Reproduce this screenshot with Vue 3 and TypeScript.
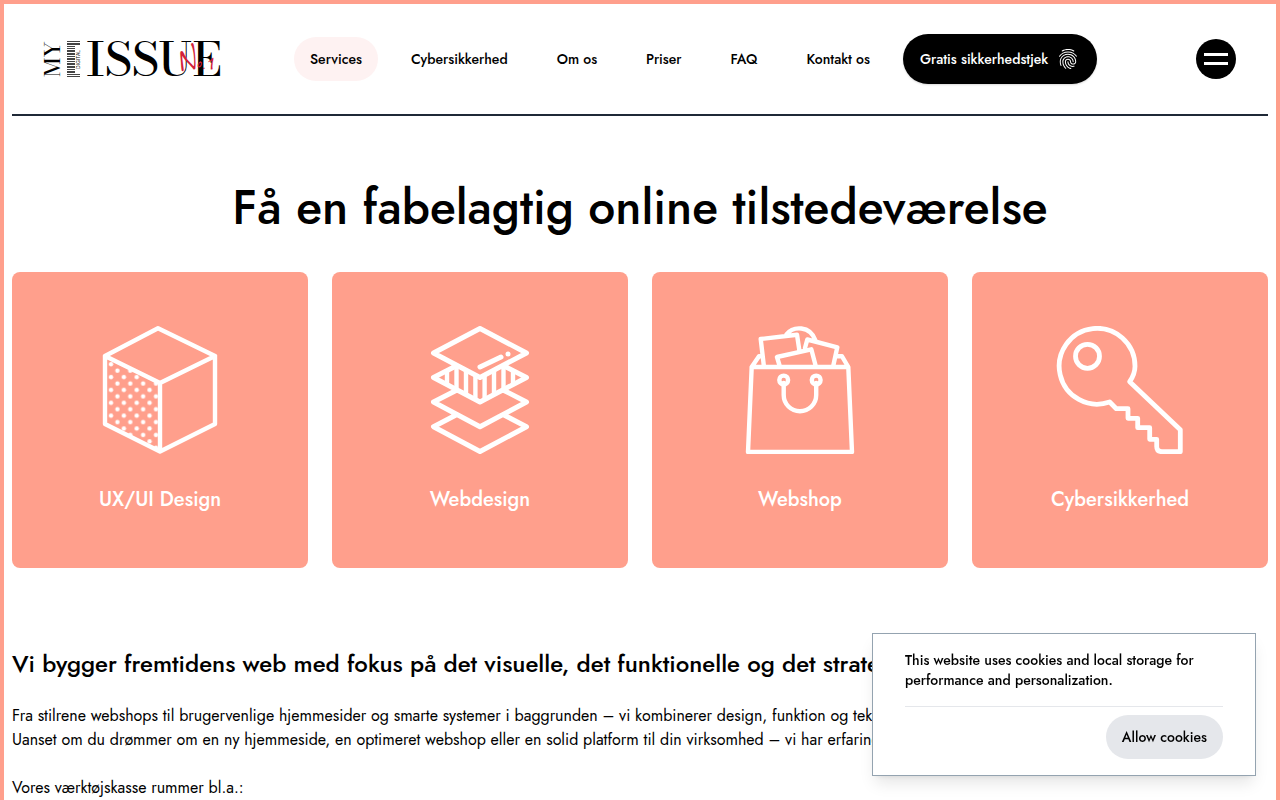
<script setup lang="ts">
import { ref } from 'vue'

interface NavItem {
  label: string
  active?: boolean
}

const navItems: NavItem[] = [
  { label: 'Services', active: true },
  { label: 'Cybersikkerhed' },
  { label: 'Om os' },
  { label: 'Priser' },
  { label: 'FAQ' },
  { label: 'Kontakt os' },
]

const barcode: number[][] = [
  [0, 1], [2, 2], [5, 1], [7, 1], [9, 2], [12, 2], [15, 1], [17, 2], [20, 1],
  [22, 2], [25, 2], [28, 1], [30, 2], [33, 1], [35, 1],
]
const stripes: number[] = [31, 40.5, 50, 59.4, 68.6, 78, 87.5, 97]
const cookiesOpen = ref(true)
</script>

<template>
  <div class="page">
    <header class="header">
      <a class="logo" href="#" aria-label="My Digital Issue No.1">
        <svg width="178" height="40" viewBox="0 0 178 40">
          <text class="logo-serif" font-size="22" transform="translate(16 38) rotate(-90)">MY</text>
          <g fill="#444">
            <rect v-for="(b, i) in barcode" :key="i" x="23" :y="b[0] + 2" :width="b[0] < 4 || b[0] > 31 ? 13 : 8" :height="b[1]" />
          </g>
          <text class="logo-tiny" transform="translate(36 30) rotate(-90)">DIGITAL</text>
          <text class="logo-serif" font-size="47" x="42" y="37">ISSUE</text>
          <text class="logo-script" x="132" y="31"><tspan font-size="40">N</tspan><tspan font-size="24">o.</tspan><tspan font-size="32">1</tspan></text>
        </svg>
      </a>
      <nav class="nav">
        <a v-for="item in navItems" :key="item.label" href="#" class="nav-link" :class="{ active: item.active }">{{ item.label }}</a>
        <a href="#" class="check">
          <span>Gratis sikkerhedstjek</span>
          <svg width="24" height="24" viewBox="0 0 24 24" fill="currentColor" aria-hidden="true">
            <path d="M17.81 4.47c-.08 0-.16-.02-.23-.06C15.66 3.42 14 3 12.01 3c-1.98 0-3.86.47-5.57 1.41-.24.13-.54.04-.68-.2-.13-.24-.04-.55.2-.68C7.82 2.52 9.86 2 12.01 2c2.13 0 3.99.47 6.03 1.52.25.13.34.43.21.67-.09.18-.26.28-.44.28zM3.5 9.72c-.1 0-.2-.03-.29-.09-.23-.16-.28-.47-.12-.7.99-1.4 2.25-2.5 3.75-3.27C9.98 4.04 14 4.03 17.15 5.65c1.5.77 2.76 1.86 3.75 3.25.16.22.11.54-.12.7-.23.16-.54.11-.7-.12-.9-1.26-2.04-2.25-3.39-2.94-2.87-1.47-6.54-1.47-9.4.01-1.36.7-2.5 1.7-3.4 2.96-.08.14-.23.21-.39.21zm6.25 12.07c-.13 0-.26-.05-.35-.15-.87-.87-1.34-1.43-2.01-2.64-.69-1.23-1.05-2.73-1.05-4.34 0-2.97 2.54-5.39 5.66-5.39s5.66 2.42 5.66 5.39c0 .28-.22.5-.5.5s-.5-.22-.5-.5c0-2.42-2.09-4.39-4.66-4.39-2.57 0-4.66 1.97-4.66 4.39 0 1.44.32 2.77.93 3.85.64 1.15 1.08 1.64 1.85 2.42.19.2.19.51 0 .71-.11.1-.24.15-.37.15zm7.17-1.85c-1.19 0-2.24-.3-3.1-.89-1.49-1.01-2.38-2.65-2.38-4.39 0-.28.22-.5.5-.5s.5.22.5.5c0 1.41.72 2.74 1.94 3.56.71.48 1.54.71 2.54.71.24 0 .64-.03 1.04-.1.27-.05.53.13.58.41.05.27-.13.53-.41.58-.57.11-1.07.12-1.21.12zM14.91 22c-.04 0-.09-.01-.13-.02-1.59-.44-2.63-1.03-3.72-2.1-1.4-1.39-2.17-3.24-2.17-5.22 0-1.62 1.38-2.94 3.08-2.94 1.7 0 3.08 1.32 3.08 2.94 0 1.07.93 1.94 2.08 1.94s2.08-.87 2.08-1.94c0-3.77-3.25-6.83-7.25-6.83-2.84 0-5.44 1.58-6.61 4.03-.39.81-.59 1.76-.59 2.8 0 .78.07 2.01.67 3.61.1.26-.03.55-.29.64-.26.1-.55-.04-.64-.29-.49-1.31-.73-2.61-.73-3.96 0-1.2.23-2.29.68-3.24 1.33-2.79 4.28-4.6 7.51-4.6 4.55 0 8.25 3.51 8.25 7.83 0 1.62-1.38 2.94-3.08 2.94s-3.08-1.32-3.08-2.94c0-1.07-.93-1.94-2.08-1.94s-2.08.87-2.08 1.94c0 1.71.66 3.31 1.87 4.51.95.94 1.86 1.46 3.27 1.85.27.07.42.35.35.61-.05.23-.26.38-.47.38z" />
          </svg>
        </a>
      </nav>
      <button class="menu" type="button" aria-label="Menu"><i></i><i></i></button>
    </header>

    <main>
      <h1>Få en fabelagtig online tilstedeværelse</h1>

      <section class="cards">
        <a class="card" href="#">
          <svg class="icon" viewBox="0 0 128 128" stroke-width="4.4">
            <defs>
              <pattern id="dots" x="11.8" y="35" width="12.86" height="12.86" patternUnits="userSpaceOnUse">
                <circle class="solid" cx="3.2" cy="3.3" r="2.2" />
                <circle class="solid" cx="9.63" cy="9.73" r="2.2" />
              </pattern>
            </defs>
            <path class="dotted" d="M9 30 64 57V126L9 98Z" />
            <path d="M62 2.3 119 30 64 57 9 30ZM9 30V98L64 125.5 119 98V30M64 57V125" />
          </svg>
          <span>UX/UI Design</span>
        </a>
        <a class="card" href="#">
          <svg class="icon" viewBox="0 0 128 128" stroke-width="5">
            <defs>
              <clipPath id="layer"><path d="M17 51.5 40 39.5 64 51.5 88 39.5 111 51.5 64 76Z" /></clipPath>
            </defs>
            <g clip-path="url(#layer)" stroke-width="4.4">
              <path v-for="s in stripes" :key="s" :d="`M${s} 36V80`" />
            </g>
            <path d="M64 2.5 110.5 27 64 51.5 17.5 27ZM39 40.5 17.5 51.5 64 76 110.5 51.5 89 40.5M40 64.5 17.5 76 64 100.7 110.5 76 88 64.5M40 89 17.5 100.7 64 125.5 110.5 100.7 88 89M64 41 85 31" />
            <circle class="solid" cx="92" cy="28" r="2.5" />
          </svg>
          <span>Webdesign</span>
        </a>
        <a class="card" href="#">
          <svg class="icon" viewBox="0 0 128 128" stroke-width="4.4">
            <path d="M15.7 41H112.3L116 126H12ZM15.7 41 23 30.3H26M112.3 41 106 30.3H101M28 41 24.7 13 61 8.7 63.3 24M50.5 8.3C57 0 74-1 79.5 14.5M69 22 71.3 13.5 101.3 21.3 97 41M44 41 41 31 75.3 23.3 80 41" />
            <circle cx="47.7" cy="54" r="4.4" />
            <circle cx="80.2" cy="54" r="4.4" />
            <path d="M47.7 57V69A16.25 16.25 0 0 0 80.2 69V57" />
          </svg>
          <span>Webshop</span>
        </a>
        <a class="card" href="#">
          <svg class="icon" viewBox="0 0 128 128" stroke-width="4.8">
            <path d="M53.7 76A37.9 37.9 0 1 1 79 40.3Q79 48 73.7 55.7L124.3 103.7V125.7H106Q100.7 125.7 100.7 120.5V113.3H93.7V101.7H81.7V92.3H72V82.7H60.3Z" />
            <circle cx="31.5" cy="30.3" r="12" />
          </svg>
          <span>Cybersikkerhed</span>
        </a>
      </section>

      <section class="intro">
        <h2>Vi bygger fremtidens web med fokus på det visuelle, det funktionelle og det strategiske</h2>
        <p>Fra stilrene webshops til brugervenlige hjemmesider og smarte systemer i baggrunden – vi kombinerer design, funktion og teknologi.<br>Uanset om du drømmer om en ny hjemmeside, en optimeret webshop eller en solid platform til din virksomhed – vi har erfaringen.</p>
        <p>Vores værktøjskasse rummer bl.a.:</p>
      </section>
    </main>

    <aside v-if="cookiesOpen" class="cookies">
      <p>This website uses cookies and local storage for performance and personalization.</p>
      <div class="cookie-actions">
        <button type="button" @click="cookiesOpen = false">Allow cookies</button>
      </div>
    </aside>
  </div>
</template>

<style>
body {
  margin: 0;
  background: #fff;
}
</style>

<style scoped>
* {
  box-sizing: border-box;
}
.page {
  border: 4px solid #ff9f8c;
  border-bottom: 0;
  padding: 0 8px;
  min-height: 100vh;
  color: #000;
  font-family: Jost, Lato, sans-serif;
  font-size: 16px;
  line-height: 24px;
}
a {
  color: inherit;
  text-decoration: none;
}
.header {
  display: flex;
  align-items: center;
  padding: 30px 32px;
  border-bottom: 2px solid #1f2937;
}
.logo {
  display: flex;
  flex: none;
}
.logo svg {
  overflow: visible;
}
.logo-serif {
  font-family: "Bodoni Moda", "Libre Bodoni", "Liberation Serif", serif;
  font-weight: 500;
}
.logo-tiny {
  font-family: "Liberation Sans", sans-serif;
  font-size: 5px;
}
.logo-script {
  font-family: "Reenie Beanie", Caveat, Lato, sans-serif;
  font-style: italic;
  fill: #d31f3a;
}
.nav {
  display: flex;
  align-items: center;
  gap: 17px;
  margin-left: 72px;
  white-space: nowrap;
  font-size: 14px;
  font-weight: 500;
  line-height: 20px;
}
.nav-link {
  padding: 12px 16px;
  border-radius: 22px;
}
.nav-link.active {
  background: #fef2f2;
}
.check {
  display: flex;
  align-items: center;
  gap: 8px;
  height: 50px;
  padding: 0 17px;
  border-radius: 25px;
  background: #000;
  color: #fff;
  box-shadow: 0 1px 2px rgb(0 0 0 / 15%);
}
.menu {
  display: flex;
  flex-direction: column;
  align-items: center;
  justify-content: center;
  gap: 6px;
  width: 40px;
  height: 40px;
  margin-left: auto;
  padding: 0;
  border: 0;
  border-radius: 50%;
  background: #000;
}
.menu i {
  width: 24px;
  height: 3px;
  background: #fff;
}
h1 {
  margin: 68px 0 40px;
  font-size: 48px;
  font-weight: 500;
  line-height: 48px;
  text-align: center;
}
.cards {
  display: grid;
  grid-template-columns: repeat(4, 1fr);
  gap: 24px;
}
.card {
  display: flex;
  flex-direction: column;
  align-items: center;
  justify-content: center;
  gap: 32px;
  aspect-ratio: 1;
  border-radius: 8px;
  background: #ff9f8c;
  color: #fff;
  font-size: 20px;
  font-weight: 500;
  line-height: 28px;
}
.icon {
  width: 128px;
  height: 128px;
  fill: none;
  stroke: #fff;
  stroke-linecap: round;
  stroke-linejoin: round;
}
.solid {
  fill: #fff;
  stroke: none;
}
.dotted {
  fill: url(#dots);
  stroke: none;
}
.intro {
  margin-top: 80px;
}
h2 {
  margin: 0;
  font-size: 24px;
  font-weight: 500;
  line-height: 32px;
}
.intro p {
  margin: 24px 0 0;
}
.cookies {
  position: fixed;
  right: 24px;
  bottom: 24px;
  width: 384px;
  padding: 16px 32px;
  border: 1px solid #94a3b0;
  background: #fff;
  box-shadow: 0 10px 15px -3px rgb(0 0 0 / 10%), 0 4px 6px -4px rgb(0 0 0 / 10%);
  font-size: 14px;
  font-weight: 500;
  line-height: 20px;
}
.cookies p {
  margin: 0 0 16px;
}
.cookie-actions {
  display: flex;
  justify-content: flex-end;
  padding-top: 8px;
  border-top: 1px solid #e5e7eb;
}
.cookie-actions button {
  padding: 12px 16px;
  border: 0;
  border-radius: 22px;
  background: #e5e7eb;
  color: #000;
  font: inherit;
}
</style>
